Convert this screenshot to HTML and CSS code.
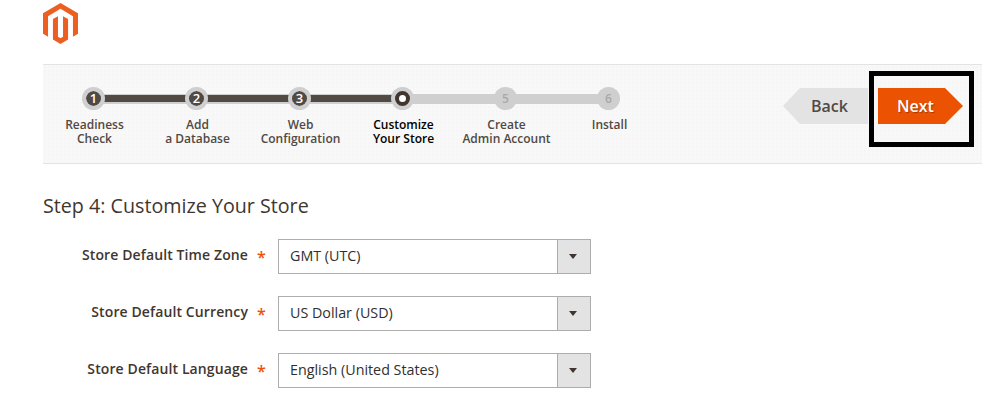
FILE: index.html
```html
<!DOCTYPE html>
<html lang="en">
<head>
<meta charset="utf-8">
<title>Step 4: Customize Your Store</title>
<link rel="stylesheet" href="styles.css">
</head>
<body>
<header class="logo-bar">
  <svg class="logo" viewBox="1.6 0 20.8 24" width="35" height="41" preserveAspectRatio="none" aria-label="Magento">
    <path fill="#ec5f21" d="M12 0 1.6 6v12l3 1.7V7.7L12 3.4l7.4 4.3v12l3-1.7V6z"/>
    <path fill="#ec5f21" d="M13.5 19.7 12 20.6l-1.5-.8V7.7l-3 1.7v12l4.5 2.6 4.5-2.6v-12l-3-1.7z"/>
  </svg>
</header>
<section class="nav-panel">
  <ol class="steps">
    <li class="step done"><span class="dot">1</span><span class="step-label">Readiness<br>Check</span></li>
    <li class="step done"><span class="dot">2</span><span class="step-label">Add<br>a Database</span></li>
    <li class="step done"><span class="dot">3</span><span class="step-label">Web<br>Configuration</span></li>
    <li class="step current"><span class="dot"></span><span class="step-label">Customize<br>Your Store</span></li>
    <li class="step"><span class="dot">5</span><span class="step-label">Create<br>Admin Account</span></li>
    <li class="step last"><span class="dot">6</span><span class="step-label">Install</span></li>
  </ol>
  <div class="actions">
    <button class="btn btn-back" type="button">Back</button>
    <button class="btn btn-next" type="button">Next</button>
  </div>
  <div class="highlight"></div>
</section>
<main class="content">
  <h1 class="title">Step 4: Customize Your Store</h1>
  <div class="form-row">
    <label class="field-label">Store Default Time Zone</label><span class="req">*</span>
    <div class="select"><span class="select-value">GMT (UTC)</span><span class="select-arrow"></span></div>
  </div>
  <div class="form-row">
    <label class="field-label">Store Default Currency</label><span class="req">*</span>
    <div class="select"><span class="select-value">US Dollar (USD)</span><span class="select-arrow"></span></div>
  </div>
  <div class="form-row">
    <label class="field-label">Store Default Language</label><span class="req">*</span>
    <div class="select"><span class="select-value">English (United States)</span><span class="select-arrow"></span></div>
  </div>
</main>
</body>
</html>
```
FILE: styles.css
```css
*, *::before, *::after { box-sizing: border-box; }
html, body { margin: 0; padding: 0; }
body {
  width: 982px;
  height: 413px;
  overflow: hidden;
  background: #fff;
  color: #41362f;
  font-family: "Open Sans", sans-serif;
}
.logo-bar {
  height: 64px;
  padding: 3px 0 0 43px;
}
.logo { display: block; }
.nav-panel {
  position: relative;
  display: flex;
  justify-content: space-between;
  margin-left: 43px;
  height: 100px;
  padding: 22px 19px 0 0;
  background-color: #f8f8f8;
  background-image: radial-gradient(#f2f2f2 0.6px, transparent 0.8px);
  background-size: 4px 4px;
  border-top: 1px solid #e3e3e3;
  border-bottom: 1px solid #e3e3e3;
}
.steps {
  display: flex;
  list-style: none;
  margin: 0 0 0 -1px;
  padding: 0;
}
.step {
  position: relative;
  display: flex;
  flex-direction: column;
  align-items: center;
  width: 103px;
}
.step::after {
  content: "";
  position: absolute;
  left: 51.5px;
  top: 7px;
  width: 103px;
  height: 10px;
  background: #cfcfcf;
}
.step.last::after { display: none; }
.step.done::after {
  background: linear-gradient(#cfcfcf 0 1px, #514943 1px 8px, #cfcfcf 8px);
}
.dot {
  position: relative;
  z-index: 1;
  width: 23px;
  height: 23px;
  border-radius: 50%;
  background: #cfcfcf;
  color: #a9a9a9;
  font-size: 12px;
  font-weight: 600;
  line-height: 23px;
  text-align: center;
}
.done .dot {
  background: #514943 content-box;
  padding: 4px;
  color: #fff;
  font-size: 13px;
  line-height: 15px;
  font-weight: 600;
  box-shadow: inset 0 0 0 4px #cfcfcf;
}
.current .dot { background: #cfcfcf; }
.current .dot::before {
  content: "";
  position: absolute;
  left: 4px;
  top: 4px;
  width: 15px;
  height: 15px;
  border-radius: 50%;
  background: #fff;
  border: 4.5px solid #41362f;
}
.step-label {
  margin: 8px 0 0 2px;
  font-size: 12px;
  font-weight: 600;
  line-height: 14px;
  color: #514943;
  text-align: center;
  white-space: nowrap;
}
.current .step-label { color: #000; font-weight: 650; }
.actions {
  display: flex;
  gap: 10px;
  align-items: flex-start;
  margin-top: 1px;
}
.btn {
  width: 85px;
  height: 36px;
  border: 0;
  padding: 0;
  font-family: inherit;
  font-size: 16px;
  font-weight: 600;
}
.btn-back {
  background: #e3e3e3;
  color: #514943;
  clip-path: polygon(17px 0, 100% 0, 100% 100%, 17px 100%, 0 50%);
  padding-left: 8px;
}
.btn-next {
  background: #eb5202;
  color: #fff;
  clip-path: polygon(0 0, 67px 0, 100% 50%, 67px 100%, 0 100%);
  padding-right: 10px;
  text-shadow: 1px 1px 1px rgba(0,0,0,.3);
}
.highlight {
  position: absolute;
  left: 826px;
  top: 6px;
  width: 105px;
  height: 76px;
  border: 5px solid #000;
}
.content { padding-left: 43px; }
.title {
  margin: 29px 0 20px;
  font-size: 19.7px;
  font-weight: 400;
  line-height: 26px;
  color: #41362f;
}
.form-row {
  display: flex;
  align-items: center;
  height: 35px;
  margin-bottom: 22px;
}
.field-label {
  width: 205px;
  margin-top: -4px;
  text-align: right;
  font-size: 14px;
  font-weight: 600;
  letter-spacing: .11px;
  white-space: nowrap;
  color: #41362f;
}
.req {
  width: 30px;
  padding-left: 9px;
  color: #eb5202;
  font-size: 16px;
  font-weight: 600;
}
.select {
  display: flex;
  align-items: stretch;
  width: 313px;
  height: 35px;
  border: 1px solid #adadad;
  background: #fff;
}
.select-value {
  flex: 1;
  padding-left: 11px;
  font-size: 14.3px;
  line-height: 31px;
  color: #303030;
}
.select-arrow {
  position: relative;
  width: 33px;
  background: #e3e3e3;
  border-left: 1px solid #adadad;
}
.select-arrow::after {
  content: "";
  position: absolute;
  left: 11px;
  top: 14px;
  border: 4.5px solid transparent;
  border-top: 5px solid #41362f;
  border-bottom-width: 0;
}
```
